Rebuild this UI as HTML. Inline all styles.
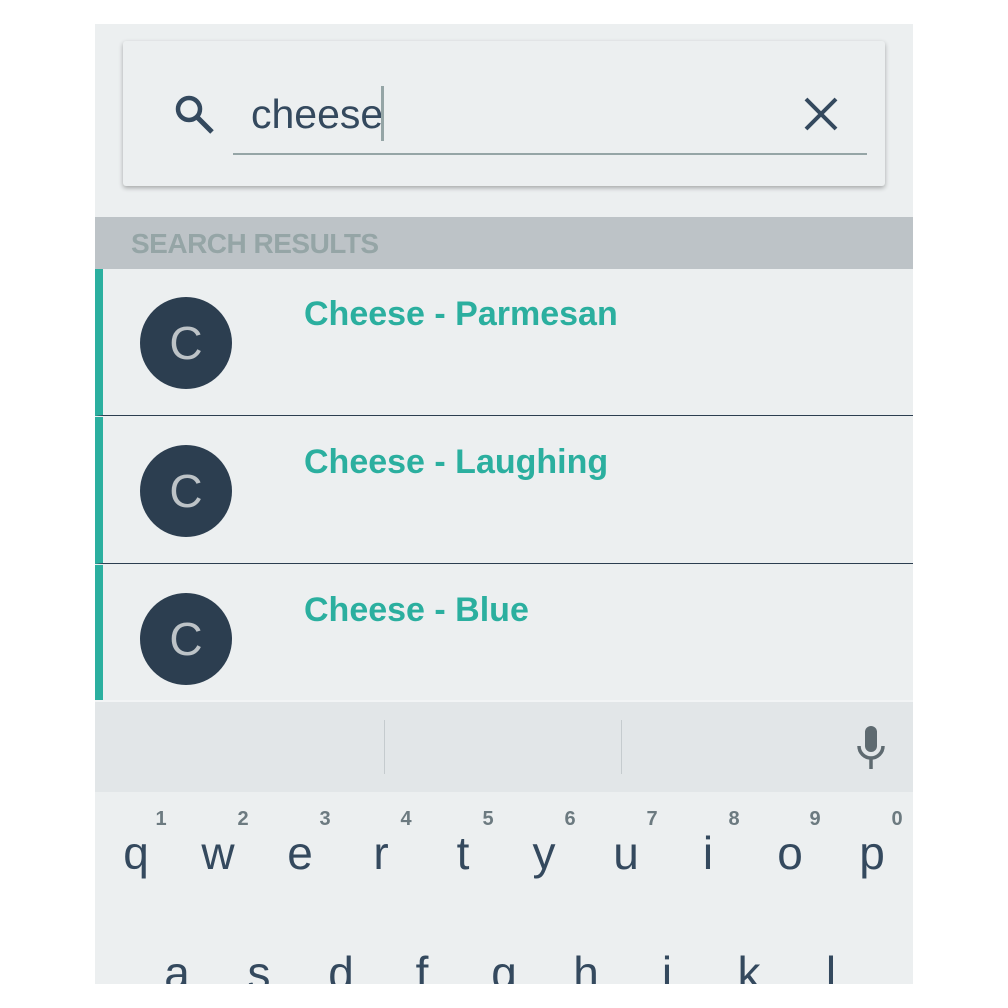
<!DOCTYPE html>
<html><head><style>
body{margin:0;width:1008px;height:1008px;background:#fff;position:relative;overflow:hidden;font-family:"Liberation Sans",sans-serif}
.scr{position:absolute;left:95px;top:24px;width:818px;height:960px;background:#ECEFF0;overflow:hidden}
.card{position:absolute;left:28px;top:17px;width:762px;height:145px;background:#ECEFF0;border-radius:3px;box-shadow:0 2px 5px rgba(0,0,0,.3)}
.hdr{position:absolute;left:0;top:193px;width:818px;height:52px;background:#BDC3C7;color:#95A5A6;font-weight:bold;font-size:28px;line-height:54px;padding-left:36px;box-sizing:border-box;letter-spacing:-.5px}
.item{position:absolute;left:0;width:818px;height:147px;border-left:8px solid #2BAF9F;box-sizing:border-box;border-bottom:1px solid #2C3E50}
.circ{position:absolute;left:37px;top:28px;width:92px;height:92px;border-radius:50%;background:#2C3E50;color:#BDC3C7;font-size:46px;text-align:center;line-height:92px}
.t{position:absolute;left:201px;top:26px;color:#2BAF9F;font-weight:bold;font-size:34px}
.sug{position:absolute;left:0;top:676px;width:818px;height:90px;background:#E2E6E8;border-top:2px solid #f2f4f5}
.k{position:absolute;font-size:46px;color:#34495E;transform:translateX(-50%)}
.n{position:absolute;font-size:20px;color:#6C7A80;font-weight:bold;transform:translateX(-50%)}
</style></head><body>
<div class="scr">
<div class="card">
<svg style="position:absolute;left:51px;top:53px" width="42" height="42" viewBox="0 0 42 42"><circle cx="15" cy="15" r="11" fill="none" stroke="#34495E" stroke-width="4.5"/><path d="M23 23L38 38" stroke="#34495E" stroke-width="5"/></svg>
<div style="position:absolute;left:128px;top:50px;font-size:41px;color:#34495E">cheese</div>
<div style="position:absolute;left:258px;top:45px;width:3px;height:55px;background:#95A5A6"></div>
<div style="position:absolute;left:110px;top:112px;width:634px;height:2px;background:#95A5A6"></div>
<svg style="position:absolute;left:681px;top:56px" width="34" height="34" viewBox="0 0 34 34"><path d="M2 2L32 32M32 2L2 32" stroke="#34495E" stroke-width="4"/></svg>
</div>
<div class="hdr">SEARCH RESULTS</div>
<div class="item" style="top:245px"><div class="circ">C</div><div class="t">Cheese - Parmesan</div></div>
<div class="item" style="top:393px"><div class="circ">C</div><div class="t">Cheese - Laughing</div></div>
<div class="item" style="top:541px;border-bottom:none;box-shadow:0 2px 3px rgba(0,0,0,.15)"><div class="circ">C</div><div class="t">Cheese - Blue</div></div>
<div class="sug">
<div style="position:absolute;left:289px;top:18px;width:1px;height:54px;background:#C5CBCE"></div>
<div style="position:absolute;left:526px;top:18px;width:1px;height:54px;background:#C5CBCE"></div>
<svg style="position:absolute;left:757px;top:22px" width="40" height="48" viewBox="0 0 40 48"><rect x="13" y="2" width="12" height="26" rx="6" fill="#5E6A70"/><path d="M7 22a12 12 0 0 0 24 0" fill="none" stroke="#5E6A70" stroke-width="3.5"/><path d="M19 34v11" stroke="#5E6A70" stroke-width="3.5"/></svg>
</div>
<div class="n" style="left:66px;top:784px">1</div><div class="k" style="left:41px;top:802px">q</div>
<div class="n" style="left:148px;top:784px">2</div><div class="k" style="left:123px;top:802px">w</div>
<div class="n" style="left:230px;top:784px">3</div><div class="k" style="left:205px;top:802px">e</div>
<div class="n" style="left:311px;top:784px">4</div><div class="k" style="left:286px;top:802px">r</div>
<div class="n" style="left:393px;top:784px">5</div><div class="k" style="left:368px;top:802px">t</div>
<div class="n" style="left:475px;top:784px">6</div><div class="k" style="left:449px;top:802px">y</div>
<div class="n" style="left:557px;top:784px">7</div><div class="k" style="left:531px;top:802px">u</div>
<div class="n" style="left:639px;top:784px">8</div><div class="k" style="left:613px;top:802px">i</div>
<div class="n" style="left:720px;top:784px">9</div><div class="k" style="left:695px;top:802px">o</div>
<div class="n" style="left:802px;top:784px">0</div><div class="k" style="left:777px;top:802px">p</div>
<div class="k" style="left:82px;top:922px">a</div>
<div class="k" style="left:164px;top:922px">s</div>
<div class="k" style="left:246px;top:922px">d</div>
<div class="k" style="left:327px;top:922px">f</div>
<div class="k" style="left:409px;top:922px">g</div>
<div class="k" style="left:491px;top:922px">h</div>
<div class="k" style="left:572px;top:922px">j</div>
<div class="k" style="left:654px;top:922px">k</div>
<div class="k" style="left:736px;top:922px">l</div>
</div>
</body></html>
